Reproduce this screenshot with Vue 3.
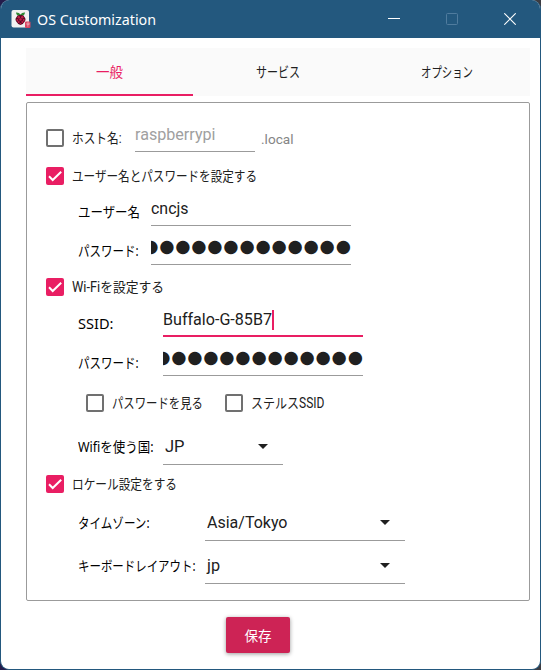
<script setup>
import { ref } from 'vue'

const tabs = [
  { text: '一般', w: 27, active: true },
  { text: 'サービス', w: 44 },
  { text: 'オプション', w: 52 },
]
const country = ref('JP')
const timezone = ref('Asia/Tokyo')
const keyboard = ref('jp')
const mask = '●'.repeat(13)

// Condenses or widens a label to the given advance width.
const vFit = {
  mounted(el, { value }) {
    const natural = el.offsetWidth
    el.style.transform = `scaleX(${value / el.getBoundingClientRect().width})`
    el.style.marginRight = `${value - natural}px`
  },
}
</script>

<template>
  <div class="desktop">
    <div class="window">
      <header class="titlebar">
        <svg class="logo" width="20" height="20" viewBox="0 0 20 20">
          <rect x="0.5" y="1" width="17.5" height="17.5" rx="2" fill="#f1f1f1" />
          <path d="M5 3.5 Q8 3.2 9.5 5.5 Q11 3.2 14 3.5 Q13.8 6.5 10.5 7 L8.5 7 Q5.2 6.5 5 3.5Z" fill="#2f8a35" />
          <path d="M9.5 6 Q13 5.6 13.4 8 Q15.4 10 13.8 12.5 Q12.5 15 9.5 16 Q6.5 15 5.2 12.5 Q3.6 10 5.6 8 Q6 5.6 9.5 6Z" fill="#5a0c24" />
          <g fill="#c31c4a">
            <circle cx="7.7" cy="8.2" r="1.2" /><circle cx="11.3" cy="8.2" r="1.2" />
            <circle cx="9.5" cy="10.5" r="1.3" /><circle cx="6.3" cy="11" r="1" />
            <circle cx="12.7" cy="11" r="1" /><circle cx="7.6" cy="13" r="1.1" />
            <circle cx="11.4" cy="13" r="1.1" /><circle cx="9.5" cy="14.7" r=".8" />
          </g>
          <rect x="14" y="12.5" width="5.5" height="6.5" rx="1" fill="#d84663" />
          <path d="M16 14h2v1.7h-2z M16 17h1.5" stroke="#f4bec8" stroke-width=".7" fill="none" />
        </svg>
        <span v-fit="119" class="title">OS Customization</span>
        <div class="controls">
          <svg width="12" height="12" viewBox="0 0 12 12"><path d="M0 5.5h12" stroke="#fff" /></svg>
          <svg width="12" height="12" viewBox="0 0 12 12"><rect x=".5" y=".5" width="11" height="11" rx="1" fill="none" stroke="#507c9e" /></svg>
          <svg width="12" height="12" viewBox="0 0 12 12"><path d="M.3.3l11.4 11.4M11.7.3L.3 11.7" stroke="#fff" stroke-width="1.1" /></svg>
        </div>
      </header>

      <nav class="tabs">
        <div v-for="t in tabs" :key="t.text" class="tab" :class="{ active: t.active }">
          <span v-fit="t.w">{{ t.text }}</span>
        </div>
      </nav>

      <main class="panel">
        <div class="row host">
          <div class="check h28">
            <i class="box"></i><span v-fit="49.5">ホスト名:</span>
          </div>
          <div class="field w120"><span v-fit="80.5" class="placeholder">raspberrypi</span></div>
          <span v-fit="32.5" class="suffix">.local</span>
        </div>

        <div class="row check section-user">
          <i class="box on"><svg viewBox="0 0 18 18"><path d="M3 9.3l3.7 3.7L15.2 4.7" /></svg></i>
          <span v-fit="185">ユーザー名とパスワードを設定する</span>
        </div>
        <div class="row sub user">
          <div class="label l73 h28"><span v-fit="62">ユーザー名</span></div>
          <div class="field w200"><span v-fit="37.5">cncjs</span></div>
        </div>
        <div class="row sub user-pass">
          <div class="label l73 h28"><span v-fit="60.5">パスワード:</span></div>
          <div class="field w200 secret"><span class="dots">{{ mask }}</span></div>
        </div>

        <div class="row check section-wifi">
          <i class="box on"><svg viewBox="0 0 18 18"><path d="M3 9.3l3.7 3.7L15.2 4.7" /></svg></i>
          <span v-fit="92">Wi-Fiを設定する</span>
        </div>
        <div class="row sub ssid">
          <div class="label l85 h26"><span v-fit="35.5">SSID:</span></div>
          <div class="field w200 focus"><span v-fit="109">Buffalo-G-85B7</span><i class="caret"></i></div>
        </div>
        <div class="row sub wifi-pass">
          <div class="label l85 h26"><span v-fit="60.5">パスワード:</span></div>
          <div class="field w200 secret"><span class="dots">{{ mask }}</span></div>
        </div>
        <div class="row options">
          <div class="check"><i class="box"></i><span v-fit="91">パスワードを見る</span></div>
          <div class="check"><i class="box"></i><span v-fit="73.5">ステルスSSID</span></div>
        </div>
        <div class="row sub country">
          <div class="label l85 h36"><span v-fit="75.5">Wifiを使う国:</span></div>
          <div class="field select w120"><span v-fit="19.5">{{ country }}</span><i class="arrow"></i></div>
        </div>

        <div class="row check section-locale">
          <i class="box on"><svg viewBox="0 0 18 18"><path d="M3 9.3l3.7 3.7L15.2 4.7" /></svg></i>
          <span v-fit="105">ロケール設定をする</span>
        </div>
        <div class="row sub timezone">
          <div class="label l127 h36"><span v-fit="71.5">タイムゾーン:</span></div>
          <div class="field select w200"><span v-fit="80.5">{{ timezone }}</span><i class="arrow"></i></div>
        </div>
        <div class="row sub keyboard">
          <div class="label l127 h36"><span v-fit="117.5">キーボードレイアウト:</span></div>
          <div class="field select w200"><span v-fit="13">{{ keyboard }}</span><i class="arrow"></i></div>
        </div>
      </main>

      <footer class="actions">
        <button class="save"><span v-fit="27">保存</span></button>
      </footer>
    </div>
  </div>
</template>

<style>
body { margin: 0; }
</style>

<style scoped>
* { box-sizing: border-box; }
.desktop {
  height: 670px;
  background: linear-gradient(90deg, #241c4b 0 50%, #3c3c42 50%);
}
.window {
  display: flex;
  flex-direction: column;
  width: 541px;
  height: 670px;
  border: 1px solid #23587e;
  border-top: 0;
  border-radius: 9px;
  overflow: hidden;
  background: #fff;
  color: #202020;
  font: 14px/20px Roboto, "Noto Sans CJK JP", sans-serif;
}
span { display: inline-block; flex: none; white-space: nowrap; transform-origin: 0 50%; }
.titlebar {
  display: flex;
  align-items: center;
  flex: none;
  height: 38px;
  padding-left: 10px;
  background: #23587e;
  color: #fff;
}
.title { margin-left: 6px; font: 15px/20px "Noto Sans", sans-serif; padding-bottom: 1px; }
.controls { display: flex; gap: 46px; margin-left: auto; padding-right: 24px; }
.controls svg { display: block; }
.tabs {
  display: grid;
  grid-template-columns: 167px 170px 167px;
  flex: none;
  width: 504px;
  height: 48px;
  margin: 10px 0 0 25px;
  background: #fafafa;
}
.tab { display: flex; align-items: center; justify-content: center; border-bottom: 2px solid transparent; padding-top: 2px; }
.tab.active { color: #e91e63; border-color: #e91e63; }
.panel {
  flex: none;
  width: 504px;
  height: 499px;
  margin: 6px 0 0 25px;
  padding: 0 0 0 19px;
  border: 1px solid #9b9b9b;
  border-radius: 2px;
}
.row { display: flex; align-items: flex-end; }
.host { height: 49px; }
.host .check { width: 89px; }
.user { height: 40px; }
.user-pass { height: 39px; }
.ssid { height: 39px; }
.wifi-pass { height: 39px; }
.country { height: 50px; }
.timezone { height: 46px; }
.keyboard { height: 43px; }
.sub { padding-left: 32px; }
.label { display: flex; flex: none; align-items: center; color: #000; font-family: "Noto Sans", "Noto Sans CJK JP", sans-serif; }
.l73 { width: 73px; }
.l85 { width: 85px; }
.l127 { width: 127px; }
.h28 { height: 28px; }
.h26 { height: 26px; }
.h36 { height: 36px; }
.check { display: flex; align-items: center; gap: 8px; }
.row.check { align-items: center; }
.section-user { height: 34px; padding-top: 14px; }
.section-wifi { height: 33px; padding-top: 11px; }
.section-locale { height: 30px; padding-top: 8px; }
.options { height: 39px; padding: 0 0 2px 40px; align-items: flex-end; }
.options .check { height: 20px; }
.options .check:first-child { width: 139px; }
.box { flex: none; width: 18px; height: 18px; border: 2px solid #707070; border-radius: 2px; }
.box.on { border: 0; background: #e91e63; }
.box svg { display: block; width: 18px; height: 18px; }
.box path { fill: none; stroke: #fff; stroke-width: 2; }
.field {
  display: flex;
  align-items: flex-end;
  height: 34px;
  padding-bottom: 6px;
  border-bottom: 1px solid #9b9b9b;
  font: 16px/20px Roboto, sans-serif;
}
.w120 { width: 120px; }
.w200 { width: 200px; }
.placeholder { color: #a0a0a0; }
.suffix { margin-left: 6px; padding-bottom: 2px; color: #858585; font-size: 13px; }
.field.focus { border-bottom: 2px solid #e91e63; padding-bottom: 5px; }
.caret { width: 2px; height: 20px; background: #e91e63; }
.secret { justify-content: flex-end; overflow: hidden; padding-bottom: 8px; }
.dots { margin-right: -.7px; font: 17.5px/20px "DejaVu Sans", sans-serif; letter-spacing: .77px; }
.select { align-items: flex-end; padding: 0 15px 7px 2px; }
.arrow {
  width: 0;
  height: 0;
  margin: 0 0 8px auto;
  border: 5px solid transparent;
  border-bottom: 0;
  border-top-color: #202020;
}
.actions { display: flex; padding: 16px 0 0 225px; }
.save {
  width: 64px;
  height: 36px;
  padding: 0;
  border: 0;
  border-radius: 2px;
  background: #cd2355;
  color: #fff;
  font: 13.5px/20px "Noto Sans CJK JP", sans-serif;
  box-shadow: 0 1px 4px rgba(0, 0, 0, .4);
}
</style>
